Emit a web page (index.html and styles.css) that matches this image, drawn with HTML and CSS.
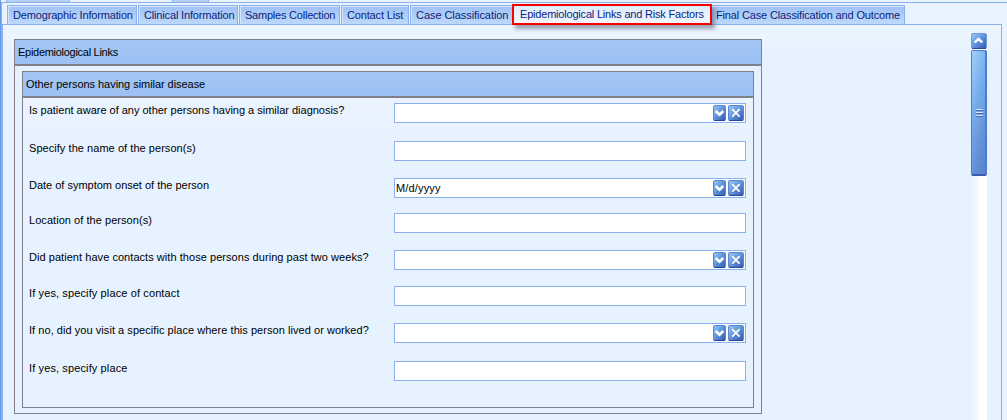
FILE: index.html
```html
<!DOCTYPE html>
<html lang="en">
<head>
<meta charset="utf-8">
<title>Epidemiological Links and Risk Factors</title>
<link rel="stylesheet" href="styles.css">
</head>
<body>
<svg width="0" height="0" class="defs" aria-hidden="true">
<defs>
<linearGradient id="face" x1="0" y1="0" x2="1" y2="1"><stop offset="0" stop-color="#9bcaf8"/><stop offset=".45" stop-color="#6499df"/><stop offset="1" stop-color="#3354ac"/></linearGradient>
<symbol id="down" viewBox="0 0 13 16"><rect x=".5" y=".5" width="12" height="15" rx="1.5" fill="url(#face)" stroke="#5c87d0"/><path d="M1 15.5H12" stroke="#2945a0"/><path d="M2.7 6l3.8 3.6L10.3 6" fill="none" stroke="#fff" stroke-width="2.6"/></symbol>
<symbol id="clear" viewBox="0 0 16 16"><rect x=".5" y=".5" width="15" height="15" rx="1.5" fill="url(#face)" stroke="#5c87d0"/><path d="M1 15.5H15" stroke="#2945a0"/><path d="M4.2 4.2l7.4 7.4M11.6 4.2l-7.4 7.4" stroke="#fff" stroke-width="1.7"/></symbol>
</defs>
</svg>
<div class="window">
<div class="upper"><span class="stub one"></span><span class="stub two"></span></div>
<nav class="tabs">
<a class="tab demo">Demographic Information</a>
<a class="tab clin">Clinical Information</a>
<a class="tab samp">Samples Collection</a>
<a class="tab cont">Contact List</a>
<a class="tab case">Case Classification</a>
<a class="tab active">Epidemiological Links and Risk Factors</a>
<a class="tab final">Final Case Classification and Outcome</a>
</nav>
<main class="page">
<section class="group outer">
<h1 class="title">Epidemiological Links</h1>
<section class="group inner">
<h2 class="title">Other persons having similar disease</h2>
<div class="rows">
<div class="row"><label class="narrow">Is patient aware of any other persons having a similar diagnosis?</label><div class="field"><svg class="down"><use href="#down"/></svg><svg class="clear"><use href="#clear"/></svg></div></div>
<div class="row"><label>Specify the name of the person(s)</label><div class="field"></div></div>
<div class="row"><label class="narrow">Date of symptom onset of the person</label><div class="field"><span class="value">M/d/yyyy</span><svg class="down"><use href="#down"/></svg><svg class="clear"><use href="#clear"/></svg></div></div>
<div class="row"><label>Location of the person(s)</label><div class="field"></div></div>
<div class="row"><label>Did patient have contacts with those persons during past two weeks?</label><div class="field"><svg class="down"><use href="#down"/></svg><svg class="clear"><use href="#clear"/></svg></div></div>
<div class="row"><label class="wide">If yes, specify place of contact</label><div class="field"></div></div>
<div class="row"><label>If no, did you visit a specific place where this person lived or worked?</label><div class="field"><svg class="down"><use href="#down"/></svg><svg class="clear"><use href="#clear"/></svg></div></div>
<div class="row"><label class="wide">If yes, specify place</label><div class="field"></div></div>
</div>
</section>
</section>
<div class="scroll">
<svg class="up" viewBox="0 0 16 16"><rect x=".5" y=".5" width="15" height="15" rx="1.5" fill="url(#face)" stroke="#6d9bdf"/><path d="M1 15.5H15" stroke="#2945a0"/><path d="M3.7 9.5L7.5 5.8 11.3 9.5" fill="none" stroke="#fff" stroke-width="2.4"/></svg>
<div class="thumb"><i></i><i></i><i></i></div>
</div>
</main>
</div>
</body>
</html>
```
FILE: styles.css
```css
* { box-sizing: border-box; }
body { margin: 0; background: #e8f3ff; color: #000; font: 11px/14px "Liberation Sans", Arial, sans-serif; letter-spacing: .05px; }
.defs { display: block; height: 0; }
.window { width: 1007px; height: 420px; overflow: hidden; display: flex; flex-direction: column; border-left: 1px solid #659be6; }
.upper { height: 3px; flex: none; display: flex; border-bottom: 1px solid #8bb0ee; padding-left: 5px; }
.stub { height: 2px; background: #b4d2f8; border: solid #8bb0ee; border-width: 0 1px; }
.one { width: 64px; margin-right: 102px; }
.two { width: 37px; }
.tabs { display: flex; height: 22px; flex: none; padding: 2px 0 0 5px; gap: 1px; border-left: 1px solid #8bb0ee; position: relative; z-index: 1; }
.tab { height: 19px; flex: none; border: 1px solid #8bb0ee; border-bottom: 0; box-shadow: inset 1px 1px #d5e6fc; background: linear-gradient(#9fc2f4, #bdd8fa); color: #0b237b; line-height: 19px; padding-left: 5px; white-space: nowrap; letter-spacing: -.16px; }
.demo { width: 130px; }
.clin { width: 100px; }
.samp { width: 101px; letter-spacing: -.22px; }
.cont { width: 68px; }
.case { width: 103px; border-right: 0; letter-spacing: -.06px; }
.tabs .active { width: 200px; height: 21px; margin: -1px 0 0 -2px; border: 2px solid #f80000; background: linear-gradient(#dfedfd, #f0f7ff); box-shadow: 3px 4px 4px rgba(70, 85, 105, .5); line-height: 17px; padding-left: 6px; position: relative; letter-spacing: -.2px; }
.final { width: 194px; margin-left: -2px; border-left: 0; padding-left: 5px; letter-spacing: -.15px; }
.page { flex: 1; width: 1001px; margin-top: -1px; border: solid #8bb0ee; border-width: 1px 1px 0 2px; display: flex; padding-left: 11px; background: linear-gradient(#edf6ff, #e6f2ff 30px); }
.group { border: 1px solid #808088; }
.outer { width: 748px; height: 375px; margin-top: 14px; padding: 0 7px; }
.inner { height: 337px; margin-top: 5px; background: linear-gradient(#edf3ff, #e7f2ff 80px); }
.title { height: 26px; margin: 0; border-bottom: 2px solid #808088; background: linear-gradient(#a3c6f5, #9bc0f3); font-size: 11px; font-weight: 400; line-height: 24px; padding-left: 3px; letter-spacing: -.05px; }
.outer > .title { margin: 0 -7px; letter-spacing: -.28px; }
.rows { padding: 5px 7px 0 6px; display: grid; grid-template-rows: 38px 37px 35px 37px 36px 37px 38px 20px; }
.row { display: grid; grid-template-columns: 365px 352px; align-items: start; }
.row label { white-space: nowrap; }
.row .narrow { letter-spacing: -.01px; }
.row .wide { letter-spacing: .12px; }
.field { height: 20px; background: #fff; border: 1px solid #8bb0ee; display: flex; justify-content: flex-end; gap: 2px; padding: 1px; }
.value { margin-right: auto; line-height: 17px; letter-spacing: .15px; }
.down { width: 13px; height: 16px; }
.clear { width: 16px; height: 16px; }
.scroll { width: 16px; margin: 8px 0 0 209px; background: linear-gradient(90deg, #e8f3ff, #fff 10px); display: flex; flex-direction: column; gap: 1px; }
.up { width: 16px; height: 16px; flex: none; }
.thumb { height: 126px; border: 1px solid #4a7bd0; border-bottom: 2px solid #3958af; border-radius: 2px; background: linear-gradient(105deg, #a2d0fb, #79b0ee 35%, #628fd5 75%, #587fc7); box-shadow: inset -1px 0 #527cc9; display: flex; flex-direction: column; justify-content: center; align-items: center; gap: 1px; }
.thumb i { width: 7px; height: 2px; background: #d4e7ff; border-bottom: 1px solid #446eb8; }
```
